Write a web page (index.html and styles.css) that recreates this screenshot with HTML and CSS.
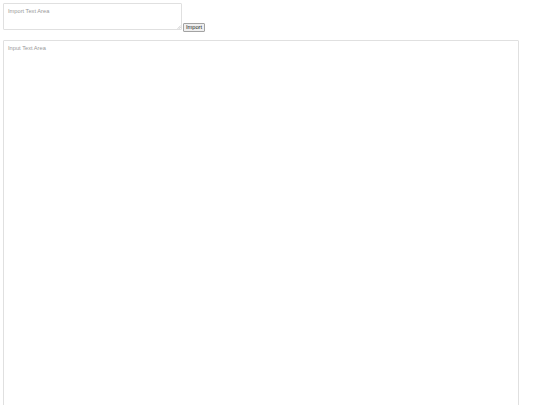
FILE: index.html
```html
<!DOCTYPE html>
<html>
<head>
<meta charset="utf-8">
<link rel="stylesheet" href="styles.css">
</head>
<body>
<div class="top-row">
  <span class="area-wrap">
    <textarea class="import-area" placeholder="Import Text Area"></textarea>
    <svg class="grip" width="4" height="4" viewBox="0 0 4 4"><path d="M0.5 3.8 L3.8 0.5 M2 3.8 L3.8 2" stroke="#b5b5b5" stroke-width="0.6" fill="none"/></svg>
  </span>
  <button class="import-btn">Import</button>
</div>
<textarea class="input-area" placeholder="Input Text Area"></textarea>
</body>
</html>
```
FILE: styles.css
```css
html, body {
  margin: 0;
  padding: 0;
  background: #ffffff;
}
body {
  padding: 3px;
  font-family: "Liberation Sans", Arial, sans-serif;
  overflow: hidden;
}
.top-row {
  display: flex;
  align-items: flex-start;
  gap: 1px;
}
.area-wrap {
  position: relative;
  display: block;
  width: 179px;
  height: 27px;
}
textarea {
  box-sizing: border-box;
  font-family: "Liberation Sans", Arial, sans-serif;
  font-size: 5.7px;
  line-height: 7px;
  color: #333;
  border: 1px solid #e0e0e0;
  border-radius: 1px;
  padding: 4px 4px;
  margin: 0;
  resize: none;
  outline: none;
}
textarea::placeholder {
  color: #999999;
}
.import-area {
  display: block;
  width: 179px;
  height: 27px;
}
.grip {
  position: absolute;
  right: 1px;
  bottom: 1px;
}
.import-btn {
  margin-top: 20px;
  width: 22px;
  height: 9px;
  padding: 0;
  font-family: "Liberation Sans", Arial, sans-serif;
  font-size: 5.7px;
  line-height: 7px;
  color: #222;
  background: #efefef;
  border: 1px solid #a3a3a3;
  border-radius: 1px;
  box-sizing: border-box;
}
.input-area {
  display: block;
  margin-top: 8px;
  width: 516px;
  height: 400px;
}
```
